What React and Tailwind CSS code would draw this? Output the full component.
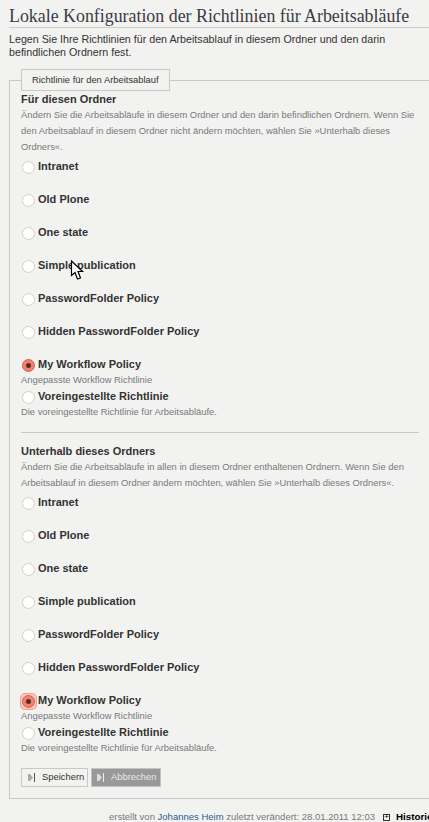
import React from "react";

const plainPolicies = [
  "Intranet",
  "Old Plone",
  "One state",
  "Simple publication",
  "PasswordFolder Policy",
  "Hidden PasswordFolder Policy",
];

const Radio = ({ checked, focused }) => (
  <span
    className={`ml-[1px] mr-[3px] mt-[2px] flex h-[13px] w-[13px] shrink-0 items-center justify-center ${
      focused
        ? "rounded-[3px] bg-[#f8c8bc] shadow-[0_0_0_1px_#f8c8bc,0_0_0_2px_#f0a090]"
        : "rounded-full"
    }`}
  >
    {checked ? (
      <span className="flex h-[13px] w-[13px] items-center justify-center rounded-full border border-[#d9604c] bg-[#f08070]">
        <span className="h-[5px] w-[5px] rounded-full bg-[#5a2a28]" />
      </span>
    ) : (
      <span className="h-[13px] w-[13px] rounded-full border border-[#d5cfc4] bg-white" />
    )}
  </span>
);

const Option = ({ label, checked, focused, hint }) => (
  <div className={hint ? "" : "h-[33px]"}>
    <div className="flex h-[16px] items-center">
      <Radio checked={checked} focused={focused} />
      <span className="text-[11px] font-bold leading-[16px] text-[#333]">
        {label}
      </span>
    </div>
    {hint && (
      <p className="h-[16px] text-[9.4px] leading-[16px] text-[#76797c]">
        {hint}
      </p>
    )}
  </div>
);

const PolicyGroup = ({ title, text, focused }) => (
  <div>
    <h3 className="text-[11px] font-bold leading-[16px] text-[#333]">{title}</h3>
    <p className="mb-[3px] text-[9.4px] leading-[16px] text-[#76797c]">{text}</p>
    {plainPolicies.map((name) => (
      <Option key={name} label={name} />
    ))}
    <Option
      label="My Workflow Policy"
      checked
      focused={focused}
      hint="Angepasste Workflow Richtlinie"
    />
    <Option
      label="Voreingestellte Richtlinie"
      hint="Die voreingestellte Richtlinie für Arbeitsabläufe."
    />
  </div>
);

const ButtonIcon = ({ light }) => (
  <svg width="7" height="9" viewBox="0 0 7 9" className="mr-[7px]">
    <path d="M0 1 H2 L5 4.5 L2 8 H0 Z" fill={light ? "#dcdcdc" : "#aaa"} />
    <rect x="6" y="0" width="1" height="9" fill={light ? "#eee" : "#555"} />
  </svg>
);

export default function App() {
  return (
    <div
      className="relative h-[822px] w-[429px] overflow-hidden bg-[#f2f2f0] text-[#333]"
      style={{ fontFamily: '"Liberation Sans", Arial, sans-serif' }}
    >
      <div className="w-[440px] pl-[9px] pt-[8px]">
        <h1
          className="whitespace-nowrap border-b border-[#ccc] pb-[2px] text-[17.87px] font-normal leading-[17px] text-[#3b3b45]"
          style={{ fontFamily: '"Liberation Serif", "Times New Roman", serif' }}
        >
          Lokale Konfiguration der Richtlinien für Arbeitsabläufe
        </h1>
        <p className="mt-[5px] w-[400px] text-[10.7px] leading-[13px] text-[#333]">
          Legen Sie Ihre Richtlinien für den Arbeitsablauf in diesem Ordner und
          den darin befindlichen Ordnern fest.
        </p>

        <fieldset className="mt-[10px] h-[730px] border border-[#c8c8c8] pl-[11px]">
          <legend className="h-[22px] border border-[#c8c8c8] px-[10px] text-[9.4px] leading-[20px] text-[#333]">
            Richtlinie für den Arbeitsablauf
          </legend>

          <div className="w-[398px]">
            <PolicyGroup
              title="Für diesen Ordner"
              text="Ändern Sie die Arbeitsabläufe in diesem Ordner und den darin befindlichen Ordnern. Wenn Sie den Arbeitsablauf in diesem Ordner nicht ändern möchten, wählen Sie »Unterhalb dieses Ordners«."
            />

            <div className="mt-[12px] mb-[10px] border-t border-[#c8c8c8]" />

            <PolicyGroup
              title="Unterhalb dieses Ordners"
              text="Ändern Sie die Arbeitsabläufe in allen in diesem Ordner enthaltenen Ordnern. Wenn Sie den Arbeitsablauf in diesem Ordner ändern möchten, wählen Sie »Unterhalb dieses Ordners«."
              focused
            />

            <div className="mt-[12px] flex gap-[3px]">
              <button className="flex h-[19px] w-[67px] items-center whitespace-nowrap border border-[#c8c8c8] pl-[6px] text-[9.4px] text-[#333]">
                <ButtonIcon />
                Speichern
              </button>
              <button className="flex h-[19px] w-[70px] items-center whitespace-nowrap border border-[#c4c4c4] bg-[#999] pl-[5px] text-[9.4px] text-[#e8e8e8]">
                <ButtonIcon light />
                Abbrechen
              </button>
            </div>
          </div>
        </fieldset>

        <div className="mt-[12px] flex items-center whitespace-nowrap pl-[100px] text-[9.5px] leading-[12px] text-[#76797c]">
          <span>
            erstellt von <span className="text-[#2c5c94]">Johannes Heim</span>{" "}
            zuletzt verändert: 28.01.2011 12:03
          </span>
          <span className="ml-[8px] flex h-[7px] w-[7px] items-center justify-center border border-[#333] text-[8px] leading-none text-black">
            +
          </span>
          <span className="ml-[6px] text-[9.8px] font-bold text-black">
            Historie
          </span>
        </div>
      </div>

      {/* mouse pointer from the capture */}
      <svg
        width="14"
        height="21"
        viewBox="0 0 14 21"
        className="absolute left-[70px] top-[260px]"
      >
        <path
          d="M1.5 1 L1.5 15.5 L5 12.5 L7.5 19 L10.5 18 L8 11.5 L12.5 11.5 Z"
          fill="#fff"
          stroke="#000"
          strokeWidth="1.2"
        />
      </svg>
    </div>
  );
}
